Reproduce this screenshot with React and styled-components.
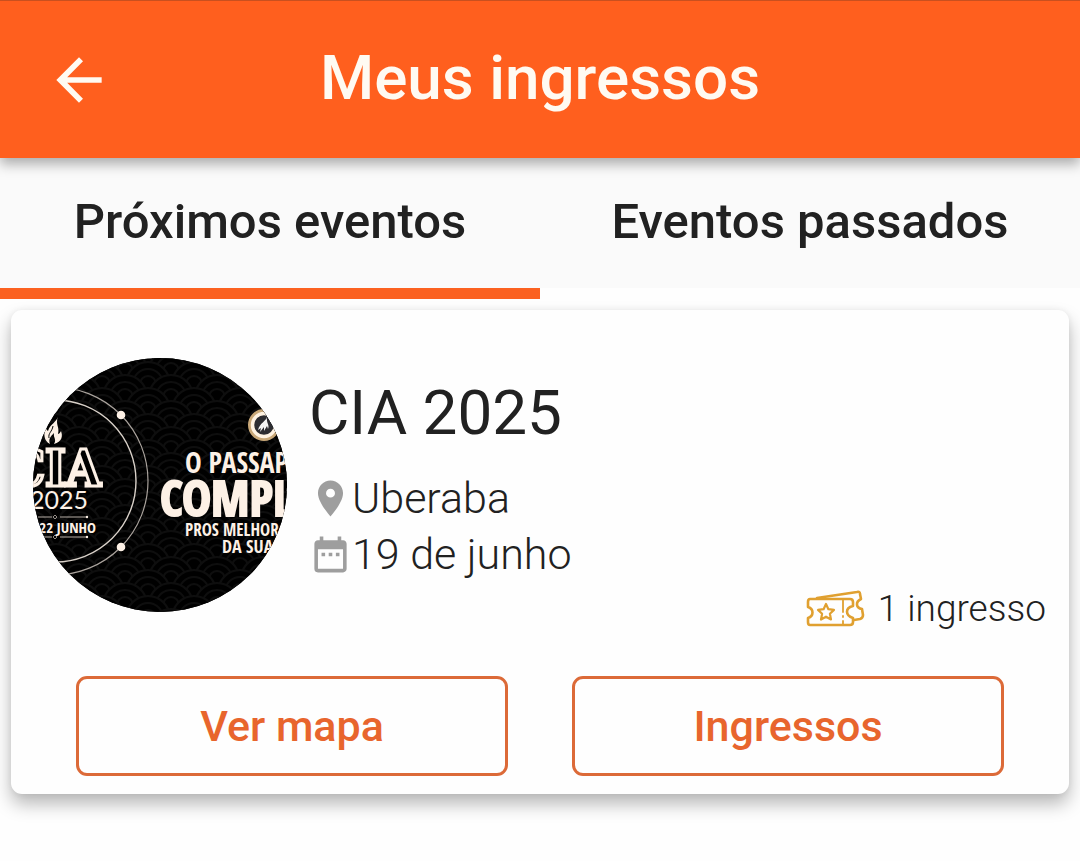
import React, { useState } from "react";
import styled, { createGlobalStyle } from "styled-components";
import { MdArrowBack, MdDateRange, MdPlace } from "react-icons/md";

const GlobalStyle = createGlobalStyle`
  * {
    box-sizing: border-box;
  }

  body {
    margin: 0;
    min-height: 100vh;
    background: #fefefe;
    color: #212121;
    font-family: Roboto, "Liberation Sans", sans-serif;
  }

  button {
    font-family: inherit;
    cursor: pointer;
  }
`;

const Header = styled.header`
  position: relative;
  display: grid;
  grid-template-columns: 68px 1fr 68px;
  align-items: center;
  height: 158px;
  padding: 0 45px;
  border-top: 1px solid #c9501f;
  background: #ff5f1e;
  color: #fffaf2;
  box-shadow: 0 6px 12px rgba(0, 0, 0, 0.32);
`;

const BackButton = styled.button`
  display: flex;
  padding: 0;
  border: none;
  background: none;
  color: inherit;
  font-size: 68px;
`;

const PageTitle = styled.h1`
  margin: 0;
  padding-bottom: 4px;
  font-size: 62px;
  font-weight: 500;
  line-height: 72px;
  text-align: center;
`;

const Tabs = styled.div`
  display: flex;
`;

const Tab = styled.button`
  flex: 1;
  height: 141px;
  padding: 0 0 4px;
  border: none;
  border-bottom: 11px solid ${props => (props.$active ? "#fb6120" : "#fefefe")};
  background: #fafafa;
  color: #212121;
  font-size: 49px;
  font-weight: 500;
`;

const Card = styled.article`
  margin: 11px;
  padding: 48px 0 18px;
  border-radius: 11px;
  background: #fefefe;
  box-shadow: 0 10px 18px rgba(0, 0, 0, 0.28), 0 0 6px rgba(0, 0, 0, 0.06);
`;

const Summary = styled.div`
  display: flex;
  align-items: flex-start;
  gap: 22px;
  padding: 0 23px 0 22px;
`;

const Avatar = styled.svg`
  flex: none;
  width: 254px;
  height: 254px;
  border-radius: 50%;
`;

const Info = styled.div`
  flex: 1;
  padding-top: 19px;
`;

const EventName = styled.h2`
  margin: 0 0 21px;
  font-size: 62px;
  font-weight: 400;
  line-height: 72px;
`;

const Detail = styled.div`
  display: flex;
  align-items: center;
  height: 56px;
  font-size: 43px;
  font-weight: 300;

  svg {
    color: #9e9e9e;
  }
`;

const TicketCount = styled.div`
  display: flex;
  align-items: center;
  justify-content: flex-end;
  gap: 13px;
  margin-top: 5px;
  font-size: 37px;
  font-weight: 300;
  line-height: 44px;
`;

const Actions = styled.div`
  display: flex;
  gap: 64px;
  margin-top: 45px;
  padding: 0 65px;
`;

const OutlineButton = styled.button`
  flex: 1;
  height: 100px;
  padding: 0;
  border: 3px solid #dc6a38;
  border-radius: 11px;
  background: none;
  color: #e8652d;
  font-size: 43px;
  font-weight: 500;
`;

const ArtText = styled.text`
  fill: #fdf1e6;
  stroke: #fdf1e6;
  stroke-width: ${props => props.$weight || 0};
  font-family: "Open Sans Condensed", "Roboto Condensed", Roboto, sans-serif;
  font-size: ${props => props.$size}px;
  font-weight: 700;
`;

const SlabText = styled.text`
  fill: #000;
  stroke: #fdf1e6;
  stroke-width: 3;
  font-family: "DejaVu Serif Condensed", "DejaVu Serif", serif;
  font-size: 50px;
  font-weight: 700;
`;

const YearText = styled.text`
  fill: #fdf1e6;
  font-family: Lato, sans-serif;
  font-size: 25px;
`;

function EventArt() {
    return (
        <Avatar viewBox="0 0 254 254" role="img" aria-label="CIA 2025">
            <defs>
                <pattern id="waves" width="46" height="26" patternUnits="userSpaceOnUse">
                    <g fill="#000" stroke="#0e0e0e" strokeWidth="2">
                        {[[0, 13], [46, 13], [23, 26], [0, 39], [46, 39]].map(([x, y]) =>
                            [22, 15, 8].map(r => (
                                <circle key={`${x}-${y}-${r}`} cx={x} cy={y} r={r} />
                            ))
                        )}
                    </g>
                </pattern>
            </defs>
            <rect width="254" height="254" fill="#000" />
            <rect width="254" height="254" fill="url(#waves)" />

            <circle cx="21" cy="123" r="94" fill="none" stroke="#a9a29c" strokeWidth="1.2" />
            <circle cx="22" cy="123" r="81" fill="none" stroke="#d8d0c8" strokeWidth="1.4" />
            <circle cx="88" cy="57" r="4.3" fill="#fdf1e6" />
            <circle cx="88" cy="189" r="4.3" fill="#fdf1e6" />

            <path
                d="M25 58c-1 6-8 8-10 15-2-1-2-3-2-4-3 7-2 14 4 17-2-5 1-8 4-11-1 5 3 6 0 11 8-2 9-8 7-13-1 2-2 3-3 3 2-7-3-9 0-18z"
                fill="#fdf1e6"
            />
            <path d="M20 68c-1 6-5 7-4 12" fill="none" stroke="#000" strokeWidth="1" />
            <SlabText x="68" y="128" textAnchor="end">CIA</SlabText>
            <YearText x="55" y="151" textAnchor="end">2025</YearText>
            <path d="M5 159h14m8 0h27M5 179h14m8 0h27" stroke="#b9b0a8" strokeWidth="1" />
            <path d="M20 159l2-2 2 2-2 2zM20 179l2-2 2 2-2 2z" fill="none" stroke="#b9b0a8" strokeWidth="0.8" />
            <circle cx="54" cy="159" r="1.2" fill="#fdf1e6" />
            <circle cx="54" cy="179" r="1.2" fill="#fdf1e6" />
            <ArtText $size={15} x="63" y="175" textAnchor="end">22 JUNHO</ArtText>

            <circle cx="231" cy="67" r="14" fill="#2d2d31" stroke="#c9a878" strokeWidth="4" />
            <circle cx="231" cy="67" r="11.5" fill="#2d2d31" stroke="#fff3e2" strokeWidth="3.5" />
            <path d="M234 59c-1 4-7 6-9 13l3-2-1 4 4-5v4l3-5 1 3c2-4-2-6-1-12z" fill="#f4f4f4" />
            <ArtText $size={28} x="152" y="115">O PASSAP</ArtText>
            <ArtText $size={49} $weight={2} x="127" y="158">COMPL</ArtText>
            <ArtText $size={17} x="152" y="178">PROS MELHOR</ArtText>
            <ArtText $size={18} x="189" y="195">DA SUA</ArtText>
        </Avatar>
    );
}

function TicketIcon() {
    return (
        <svg width="60" height="38" viewBox="0 0 60 38" fill="none" stroke="#e0a030" strokeWidth="2.6" strokeLinejoin="round" strokeLinecap="round" aria-hidden="true">
            <path d="M5 9h40q3 0 3 3v4c-8 2-8 9 0 12v4q0 3-3 3H5q-2 0-2-3v-4c6-2 6-9 0-11v-5q0-3 2-3z" />
            <path d="M12 8L52 2q3-1 3 2l1 5c-6 3-5 9 1 10l1 6q0 3-3 4l-6 1" />
            <path d="M21 14l2.4 5.2 5.6.7-4.1 3.9 1.1 5.7-5-2.8-5 2.8 1.1-5.7-4.1-3.9 5.6-.7z" strokeWidth="2.2" />
            <path d="M38 10v12M38 26v1M38 31v3" strokeWidth="1.8" />
        </svg>
    );
}

const tabs = ["Próximos eventos", "Eventos passados"];

export default function App() {
    const [active, setActive] = useState(0);

    return (
        <>
            <GlobalStyle />
            <Header>
                <BackButton aria-label="Voltar">
                    <MdArrowBack />
                </BackButton>
                <PageTitle>Meus ingressos</PageTitle>
            </Header>
            <Tabs role="tablist">
                {tabs.map((label, i) => (
                    <Tab
                        key={label}
                        role="tab"
                        aria-selected={active === i}
                        $active={active === i}
                        onClick={() => setActive(i)}
                    >
                        {label}
                    </Tab>
                ))}
            </Tabs>
            <main>
                <Card>
                    <Summary>
                        <EventArt />
                        <Info>
                            <EventName>CIA 2025</EventName>
                            <Detail>
                                <MdPlace />
                                Uberaba
                            </Detail>
                            <Detail>
                                <MdDateRange />
                                19 de junho
                            </Detail>
                            <TicketCount>
                                <TicketIcon />
                                1 ingresso
                            </TicketCount>
                        </Info>
                    </Summary>
                    <Actions>
                        <OutlineButton>Ver mapa</OutlineButton>
                        <OutlineButton>Ingressos</OutlineButton>
                    </Actions>
                </Card>
            </main>
        </>
    );
}
